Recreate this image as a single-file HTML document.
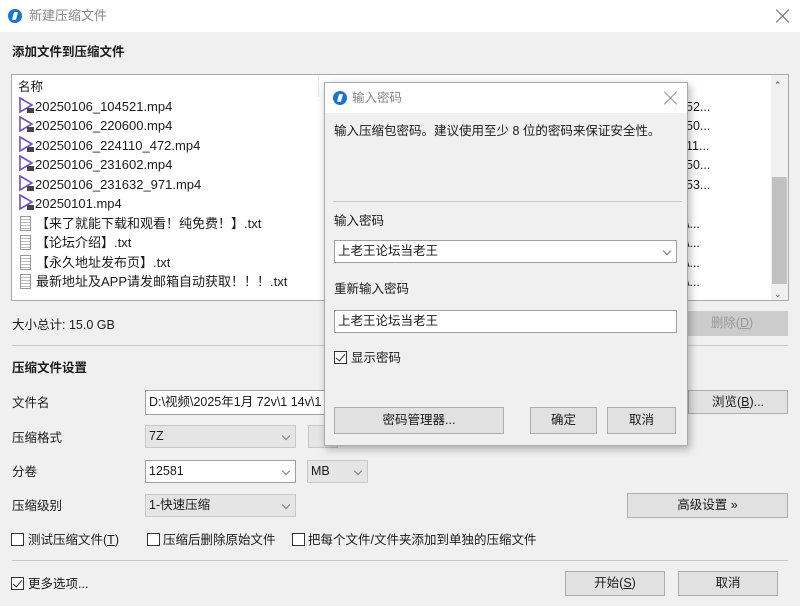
<!DOCTYPE html>
<html><head><meta charset="utf-8"><style>
*{margin:0;padding:0;box-sizing:border-box}
body{width:800px;height:606px;background:#f0f0f0;font-family:"Liberation Sans","Noto Sans CJK SC",sans-serif;font-size:12.5px;color:#1a1a1a;position:relative;overflow:hidden}
.a{position:absolute;white-space:nowrap}
.t{position:absolute;white-space:nowrap;line-height:16px}
.b{font-weight:bold}
.btn{position:absolute;background:#e1e1e1;border:1px solid #adadad;text-align:center;line-height:23px}
.inp{position:absolute;background:#fff;border:1px solid #a0a0a0;padding-left:3px;line-height:20px}
.sel{position:absolute;background:#e5e5e5;border:1px solid #c8c8c8;padding-left:3px;line-height:20px}
.chev{position:absolute;right:6px;top:7px;width:6px;height:6px;border:solid #777;border-width:0 1px 1px 0;transform:rotate(45deg)}
.cb{position:absolute;width:13px;height:13px;border:1px solid #333;background:#fff}
.cb.c::after{content:"";position:absolute;left:3px;top:0px;width:4px;height:8px;border:solid #333;border-width:0 1px 1px 0;transform:rotate(40deg)}
.ic{position:absolute;width:14px;height:14px;border-radius:50%;background:#1a73d9}
.ic::after{content:"";position:absolute;left:5px;top:3px;width:4px;height:8px;background:#fff;transform:skewX(-15deg);border-radius:1px}
.row{position:absolute;left:18px;height:19px;line-height:19px;font-size:13px}
.doc{display:inline-block;width:11px;height:15px;border:1px solid #999;background:repeating-linear-gradient(#fff 0 2px,#bbb 2px 3px);vertical-align:-3px;margin:0 5px 0 2px}
.x{position:absolute;width:14px;height:14px}
.x::before,.x::after{content:"";position:absolute;left:6px;top:-2px;width:1px;height:18px;background:#666;transform:rotate(45deg)}
.x::after{transform:rotate(-45deg)}
</style></head><body>
<div class="a" style="left:0;top:0;width:800px;height:32px;background:#fff"></div>
<div class="ic" style="left:8px;top:9px"></div>
<div class="t" style="left:29px;top:8px;color:#888;font-size:13px">新建压缩文件</div>
<div class="x" style="left:776px;top:9px"></div>
<div class="t b" style="left:12px;top:44px">添加文件到压缩文件</div>

<div class="a" style="left:11px;top:74px;width:778px;height:227px;background:#fff;border:1px solid #aaa"></div>
<div class="a" style="left:318px;top:75px;width:1px;height:22px;background:#e5e5e5"></div>
<div class="t" style="left:18px;top:79px">名称</div>
<div class="a" style="left:771px;top:75px;width:17px;height:225px;background:#f0f0f0"></div>
<div class="a" style="left:772px;top:177px;width:15px;height:107px;background:#c1c1c1"></div>
<div class="t" style="left:774px;top:77px;font-size:9px;color:#555">⌃</div>
<div class="t" style="left:774px;top:286px;font-size:9px;color:#555">⌄</div>

<div class="row" style="top:97px"><svg width="17" height="17" style="vertical-align:-3px"><path d="M2 1 L14 8 L2 15 Z" fill="none" stroke="#6d4fd1" stroke-width="1.6"/><rect x="9" y="11" width="7" height="5" fill="#444"/></svg>20250106_104521.mp4</div>
<div class="row" style="top:116px"><svg width="17" height="17" style="vertical-align:-3px"><path d="M2 1 L14 8 L2 15 Z" fill="none" stroke="#6d4fd1" stroke-width="1.6"/><rect x="9" y="11" width="7" height="5" fill="#444"/></svg>20250106_220600.mp4</div>
<div class="row" style="top:136px"><svg width="17" height="17" style="vertical-align:-3px"><path d="M2 1 L14 8 L2 15 Z" fill="none" stroke="#6d4fd1" stroke-width="1.6"/><rect x="9" y="11" width="7" height="5" fill="#444"/></svg>20250106_224110_472.mp4</div>
<div class="row" style="top:155px"><svg width="17" height="17" style="vertical-align:-3px"><path d="M2 1 L14 8 L2 15 Z" fill="none" stroke="#6d4fd1" stroke-width="1.6"/><rect x="9" y="11" width="7" height="5" fill="#444"/></svg>20250106_231602.mp4</div>
<div class="row" style="top:175px"><svg width="17" height="17" style="vertical-align:-3px"><path d="M2 1 L14 8 L2 15 Z" fill="none" stroke="#6d4fd1" stroke-width="1.6"/><rect x="9" y="11" width="7" height="5" fill="#444"/></svg>20250106_231632_971.mp4</div>
<div class="row" style="top:194px"><svg width="17" height="17" style="vertical-align:-3px"><path d="M2 1 L14 8 L2 15 Z" fill="none" stroke="#6d4fd1" stroke-width="1.6"/><rect x="9" y="11" width="7" height="5" fill="#444"/></svg>20250101.mp4</div>
<div class="row" style="top:214px"><span class="doc"></span>【来了就能下载和观看！纯免费！】.txt</div>
<div class="row" style="top:233px"><span class="doc"></span>【论坛介绍】.txt</div>
<div class="row" style="top:253px"><span class="doc"></span>【永久地址发布页】.txt</div>
<div class="row" style="top:272px"><span class="doc"></span>最新地址及APP请发邮箱自动获取！！！.txt</div>
<div class="t" style="left:686px;top:99px">52...</div>
<div class="t" style="left:686px;top:118px">50...</div>
<div class="t" style="left:686px;top:138px">11...</div>
<div class="t" style="left:686px;top:157px">50...</div>
<div class="t" style="left:686px;top:177px">53...</div>
<div class="t" style="left:686px;top:216px">\...</div>
<div class="t" style="left:686px;top:235px">\...</div>
<div class="t" style="left:686px;top:255px">\...</div>
<div class="t" style="left:686px;top:274px">\...</div>

<div class="t" style="left:12px;top:317px">大小总计: 15.0 GB</div>
<div class="btn" style="left:676px;top:311px;width:112px;height:25px;background:#ccc;border-color:#ccc;color:#999">删除(<u>D</u>)</div>
<div class="a" style="left:12px;top:345px;width:776px;height:1px;background:#c8c8c8"></div>
<div class="t b" style="left:12px;top:360px">压缩文件设置</div>
<div class="t" style="left:12px;top:395px">文件名</div>
<div class="t" style="left:12px;top:430px">压缩格式</div>
<div class="t" style="left:12px;top:464px">分卷</div>
<div class="t" style="left:12px;top:498px">压缩级别</div>
<div class="inp" style="left:145px;top:390px;width:200px;height:25px;line-height:22px">D:\视频\2025年1月 72v\1 14v\1</div>
<div class="btn" style="left:688px;top:390px;width:100px;height:24px">浏览(<u>B</u>)...</div>
<div class="sel" style="left:145px;top:425px;width:151px;height:23px">7Z<span class="chev"></span></div>
<div class="sel" style="left:308px;top:425px;width:30px;height:23px"></div>
<div class="inp" style="left:145px;top:460px;width:151px;height:23px">12581<span class="chev"></span></div>
<div class="sel" style="left:307px;top:460px;width:61px;height:23px">MB<span class="chev"></span></div>
<div class="sel" style="left:145px;top:494px;width:151px;height:23px">1-快速压缩<span class="chev"></span></div>
<div class="btn" style="left:627px;top:493px;width:161px;height:25px">高级设置 »</div>
<div class="cb" style="left:11px;top:533px"></div><div class="t" style="left:28px;top:532px">测试压缩文件(<u>T</u>)</div>
<div class="cb" style="left:147px;top:533px"></div><div class="t" style="left:163px;top:532px">压缩后删除原始文件</div>
<div class="cb" style="left:292px;top:533px"></div><div class="t" style="left:308px;top:532px">把每个文件/文件夹添加到单独的压缩文件</div>
<div class="a" style="left:12px;top:560px;width:776px;height:1px;background:#c8c8c8"></div>
<div class="cb c" style="left:11px;top:577px"></div><div class="t" style="left:28px;top:576px">更多选项...</div>
<div class="btn" style="left:565px;top:571px;width:100px;height:25px">开始(<u>S</u>)</div>
<div class="btn" style="left:678px;top:571px;width:100px;height:25px">取消</div>

<!-- dialog -->
<div class="a" style="left:324px;top:82px;width:364px;height:364px;background:#f0f0f0;border:1px solid #aaa;box-shadow:2px 3px 8px rgba(0,0,0,.3)"></div>
<div class="a" style="left:325px;top:83px;width:362px;height:30px;background:#fff"></div>
<div class="ic" style="left:333px;top:91px"></div>
<div class="t" style="left:352px;top:90px;color:#888">输入密码</div>
<div class="x" style="left:664px;top:91px;opacity:.7"></div>
<div class="t" style="left:334px;top:123px">输入压缩包密码。建议使用至少 8 位的密码来保证安全性。</div>
<div class="a" style="left:333px;top:201px;width:349px;height:1px;background:#c8c8c8"></div>
<div class="t" style="left:334px;top:213px">输入密码</div>
<div class="inp" style="left:334px;top:240px;width:343px;height:23px">上老王论坛当老王<span class="chev"></span></div>
<div class="t" style="left:334px;top:281px">重新输入密码</div>
<div class="inp" style="left:334px;top:310px;width:343px;height:23px">上老王论坛当老王</div>
<div class="cb c" style="left:334px;top:351px"></div><div class="t" style="left:351px;top:350px">显示密码</div>
<div class="btn" style="left:334px;top:407px;width:170px;height:27px;line-height:25px">密码管理器...</div>
<div class="btn" style="left:530px;top:407px;width:67px;height:27px;line-height:25px">确定</div>
<div class="btn" style="left:607px;top:407px;width:69px;height:27px;line-height:25px">取消</div>
</body></html>
